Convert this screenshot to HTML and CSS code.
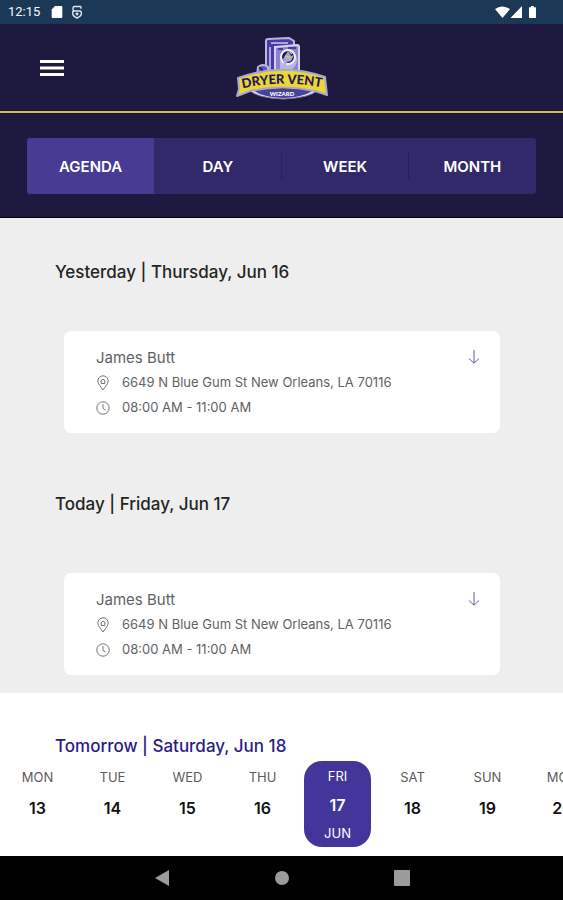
FILE: index.html
```html
<!DOCTYPE html>
<html lang="en">
<head>
<meta charset="utf-8">
<meta name="viewport" content="width=device-width, initial-scale=1">
<title>Dryer Vent Wizard – Agenda</title>
<link rel="stylesheet" href="styles.css">
</head>
<body>
<svg class="symbols" aria-hidden="true">
  <symbol id="pin" viewBox="0 0 14 16">
    <path d="M7 15C5 11.800 1.800 9 1.800 6a5.200 5.200 0 0 1 10.400 0C12.200 9 9 11.800 7 15Z"/>
    <path d="M4.500 6.200 7 4l2.500 2.200M5.200 6v2.500h3.600V6"/>
  </symbol>
  <symbol id="clock" viewBox="0 0 14 14">
    <circle cx="7" cy="7" r="6.200"/>
    <path d="M7 3v4.500l2.500 1.500"/>
  </symbol>
  <symbol id="down" viewBox="0 0 12 16">
    <path d="M6 1v13M1 9.500l5 4.700 5-4.700"/>
  </symbol>
</svg>

<div class="status">
  <span class="time">12:15</span>
  <svg class="status-icon" viewBox="0 0 12 14" aria-hidden="true"><path d="M4 1h6.500q.800 0 .800.800v10.400q0 .800-.800.800h-9q-.800 0-.800-.800V4.500Z" fill="#fff"/></svg>
  <svg class="status-icon wide" viewBox="0 0 12 14" aria-hidden="true"><path d="M10 1.500H3.500Q2 1.500 2 3v1.500q0 1.500 1.500 1.500H9q1.300 0 1.300 1.300V9q0 2-4.300 4Q1.800 11 1.800 9V6M10 1.500v2.300M4.500 8.800h3M6 7.500v3" fill="none" stroke="#dfe7f2" stroke-width="1.400"/></svg>
  <svg class="signal" viewBox="0 0 44 14" aria-hidden="true"><g fill="#fff"><path d="M0 4Q7 -1 15 4L7.500 13Z"/><path d="M27 1v12H15.500Z"/><path d="M36 1h3v1.200h1.500q.500 0 .500.500V12.500q0 .500-.500.500h-6q-.500 0-.500-.500V2.700q0-.500.500-.500H36Z"/></g></svg>
</div>

<header class="header">
  <button class="menu" aria-label="Menu">
    <svg viewBox="0 0 24 18" aria-hidden="true"><path d="M0 2.500h24M0 9h24M0 15.500h24" stroke="#fff" stroke-width="3"/></svg>
  </button>
  <svg class="logo" viewBox="0 0 92 64" role="img" aria-label="Dryer Vent Wizard">
    <defs><path id="arc" d="M3 53Q46 43 89 52"/></defs>
    <path d="M30 43V5q0-2 2-2l21-1 5 3v40Z" fill="#473ca4" stroke="#b9b7da" stroke-width="2"/>
    <path d="M35 7h17M34 11v28" stroke="#aaa4df" stroke-width="2"/>
    <path d="m39 11 22-2q2 0 2 2v31H39Z" fill="#8a84cc" stroke="#d3d2ea" stroke-width="2"/>
    <path d="M42 13h5M52 12h8" stroke="#473ca4" stroke-width="2"/>
    <path d="M44 37V21q2-8 9-7 7 2 8 9 0 7-5 10l-4 7Z" fill="#b9b8df"/>
    <circle cx="52" cy="21" r="7" fill="#201866" stroke="#eeeefc" stroke-width="2"/>
    <path d="m47 23 5-8 3 5 3-1-3 6-4 1-2 4Z" fill="#a8a5dc"/><path d="m53 15 3 3m-7 2 6 2" stroke="#d8cb5f" stroke-width="1.500"/>
    <path d="M22 31q5-4 10 0v9H21Z" fill="#6159ae" stroke="#b9b7da" stroke-width="2"/>
    <path d="M23 32q3-1 4 6" fill="none" stroke="#282070" stroke-width="2"/>
    <path d="M13 54h69q-8 8-35 9-26-1-34-9Z" fill="#dedff2" stroke="#77739c"/>
    <path d="M17 54h60q-8 7-30 8-22-1-30-8Z" fill="#4a419e"/>
    <path d="M2 42Q46 26 89 41l2 18-12-4Q46 48 14 55L1 60l2-7Z" fill="#ecd62f" stroke="#a9a7d3" stroke-width="2" stroke-linejoin="round"/>
    <text class="logo-name"><textPath href="#arc" startOffset="50%" text-anchor="middle">DRYER VENT</textPath></text>
    <text class="logo-sub" x="46" y="60" text-anchor="middle">WIZARD</text>
  </svg>
</header>

<nav class="tabs" aria-label="Calendar view">
  <div class="tab-group">
    <button class="tab active" aria-pressed="true">AGENDA</button>
    <button class="tab">DAY</button>
    <button class="tab">WEEK</button>
    <button class="tab">MONTH</button>
  </div>
</nav>

<main class="agenda">
  <section class="day-block">
    <h2>Yesterday | Thursday, Jun 16</h2>
    <article class="card">
      <div class="details">
        <h3>James Butt</h3>
        <p><svg class="icon pin"><use href="#pin"/></svg>6649 N Blue Gum St New Orleans, LA 70116</p>
        <p><svg class="icon"><use href="#clock"/></svg>08:00 AM - 11:00 AM</p>
      </div>
      <button class="expand" aria-label="Show details"><svg><use href="#down"/></svg></button>
    </article>
  </section>
  <section class="day-block today">
    <h2>Today | Friday, Jun 17</h2>
    <article class="card">
      <div class="details">
        <h3>James Butt</h3>
        <p><svg class="icon pin"><use href="#pin"/></svg>6649 N Blue Gum St New Orleans, LA 70116</p>
        <p><svg class="icon"><use href="#clock"/></svg>08:00 AM - 11:00 AM</p>
      </div>
      <button class="expand" aria-label="Show details"><svg><use href="#down"/></svg></button>
    </article>
  </section>
</main>

<section class="upcoming">
  <h2>Tomorrow | Saturday, Jun 18</h2>
  <div class="dates">
    <button class="date"><span>MON</span><b>13</b></button>
    <button class="date"><span>TUE</span><b>14</b></button>
    <button class="date"><span>WED</span><b>15</b></button>
    <button class="date"><span>THU</span><b>16</b></button>
    <button class="date selected" aria-pressed="true"><span>FRI</span><b>17</b><span>JUN</span></button>
    <button class="date"><span>SAT</span><b>18</b></button>
    <button class="date"><span>SUN</span><b>19</b></button>
    <button class="date"><span>MON</span><b>20</b></button>
  </div>
</section>

<nav class="system" aria-label="System">
  <button aria-label="Back"><svg viewBox="0 0 16 16"><path d="M15 0v16L1 8Z"/></svg></button>
  <button aria-label="Home"><svg viewBox="0 0 16 16"><circle cx="8" cy="8" r="7"/></svg></button>
  <button aria-label="Recent apps"><svg viewBox="0 0 16 16"><rect width="16" height="16" rx="1"/></svg></button>
</nav>
</body>
</html>
```

FILE: styles.css
```css
* { box-sizing: border-box; }

body {
  margin: 0;
  min-height: 100vh;
  display: flex;
  flex-direction: column;
  overflow-x: hidden;
  background: #fff;
  font-family: Inter, Roboto, sans-serif;
}

button {
  border: 0;
  padding: 0;
  background: none;
  color: inherit;
  font: inherit;
  cursor: pointer;
}

h2, h3, p { margin: 0; }
svg { display: block; }
.symbols { display: none; }

.status {
  display: flex;
  align-items: center;
  height: 24px;
  padding: 0 24px 0 8px;
  background: #1c3857;
  color: #f4f6fa;
  font: 400 13px/24px Roboto, sans-serif;
}
.status-icon { width: 12px; height: 14px; margin-left: 11px; }
.status-icon.wide { margin-left: 8px; }
.signal { width: 44px; height: 14px; margin-left: auto; }

.header {
  display: grid;
  grid-template-columns: 1fr auto 1fr;
  align-items: center;
  height: 89px;
  padding: 0 40px;
  border-bottom: 2px solid #cdbd4a;
  background: #1e193f;
}
.menu { width: 24px; height: 18px; }
.menu svg { width: 24px; height: 18px; }
.logo { width: 92px; height: 64px; }
.logo-name { font: 900 13px Lato, sans-serif; fill: #201866; }
.logo-sub { font: 900 6px Lato, sans-serif; fill: #fff; }

.tabs {
  padding: 25px 27px 23px;
  border-bottom: 1px solid #000;
  background: #1e193f;
}
.tab-group {
  display: flex;
  overflow: hidden;
  border-radius: 3px;
  background: #32296a;
}
.tab {
  position: relative;
  flex: 1;
  height: 56px;
  color: #fff;
  font-size: 15px;
  font-weight: 600;
}
.tab.active { background: #483b94; }
.tab:not(.active):not(:last-child)::after {
  content: "";
  position: absolute;
  top: 14px;
  right: 0;
  width: 1px;
  height: 28px;
  background: #282156;
}

h2 {
  padding-left: 55px;
  color: #242424;
  font-size: 17px;
  font-weight: 500;
  line-height: 24px;
}

.agenda {
  flex: 1;
  padding: 42px 0 18px;
  background: #eee;
}
.day-block.today { margin-top: 59px; }
.card {
  display: flex;
  justify-content: space-between;
  margin: 47px 63px 0 64px;
  padding: 15px 20px 13px 32px;
  border-radius: 7px;
  background: #fff;
  color: #626262;
}
.today .card { margin-top: 57px; }
.card h3 {
  font-size: 15px;
  font-weight: 400;
  line-height: 24px;
}
.card p {
  display: flex;
  align-items: center;
  gap: 12px;
  height: 25px;
  font-size: 13px;
  line-height: 25px;
}
.icon {
  width: 14px;
  height: 14px;
  fill: none;
  stroke: #747474;
}
.icon.pin { height: 16px; }
.expand { align-self: flex-start; margin-top: 3px; }
.expand svg {
  width: 12px;
  height: 16px;
  fill: none;
  stroke: #675aa6;
}

.upcoming { padding-top: 41px; }
.upcoming h2 { color: #2c1b87; }
.dates {
  display: flex;
  margin-top: 3px;
  padding-bottom: 9px;
  overflow: hidden;
}
.date {
  flex: 0 0 67px;
  display: flex;
  flex-direction: column;
  align-items: center;
  justify-content: flex-start;
  height: 86px;
  margin: 0 4px;
  padding-top: 4px;
  color: #5c5c5c;
  font-size: 13px;
  line-height: 24px;
}
.date b {
  margin-top: 7px;
  color: #111;
  font-size: 16px;
  font-weight: 600;
}
.date.selected {
  padding-top: 3px;
  border-radius: 18px;
  background: #43359a;
  color: #fff;
}
.date.selected b { margin: 5px 0 4px; color: #fff; }

.system {
  display: flex;
  align-items: center;
  justify-content: center;
  gap: 104px;
  height: 44px;
  background: #000;
}
.system svg { width: 16px; height: 16px; fill: #9b9b9b; }
```
